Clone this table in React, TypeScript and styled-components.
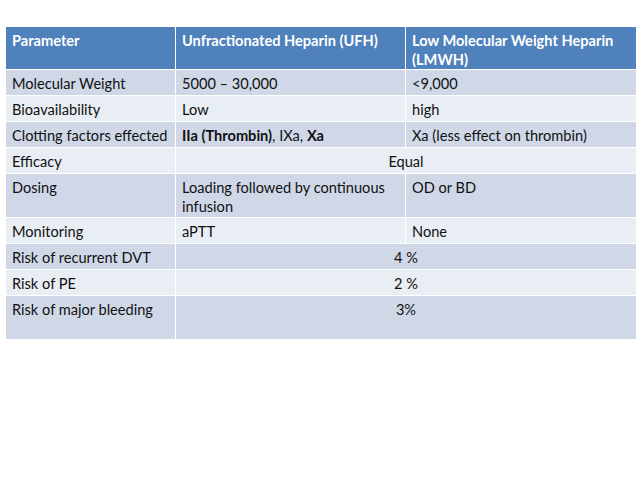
import React from "react";
import styled, { createGlobalStyle } from "styled-components";

const Global = createGlobalStyle`
  html, body { margin: 0; padding: 0; background: #ffffff; }
  body { font-family: "Lato", "Liberation Sans", sans-serif; }
`;

const Page = styled.div`
  width: 638px;
  height: 479px;
  padding: 26px 0 0 5px;
  box-sizing: border-box;
  background: #ffffff;
`;

const Table = styled.table`
  border-collapse: collapse;
  table-layout: fixed;
  width: 631px;
  font-family: "Lato", "Liberation Sans", sans-serif;
  font-size: 14.6px;
  color: #111111;
`;

const HeadCell = styled.th`
  background: #4f81bd;
  color: #ffffff;
  font-weight: 700;
  text-align: left;
  vertical-align: top;
  height: 43px;
  padding: 4px 6px 0 6px;
  box-sizing: border-box;
  border: 1px solid #ffffff;
  line-height: 19px;
`;

const Row = styled.tr<{ $alt: boolean; $tall?: boolean }>`
  background: ${(p) => (p.$alt ? "#e9edf4" : "#d0d8e8")};
  height: ${(p) => (p.$tall ? "44px" : "26px")};
`;

const Cell = styled.td<{ $center?: boolean }>`
  border: 1px solid #ffffff;
  padding: 4px 6px 0 6px;
  vertical-align: top;
  text-align: ${(p) => (p.$center ? "center" : "left")};
  line-height: 19px;
  box-sizing: border-box;
`;

const B = styled.b`
  font-weight: 700;
`;

export default function App() {
  return (
    <>
      <Global />
      <Page>
        <Table>
          <colgroup>
            <col style={{ width: 170 }} />
            <col style={{ width: 230 }} />
            <col style={{ width: 231 }} />
          </colgroup>
          <thead>
            <tr>
              <HeadCell>Parameter</HeadCell>
              <HeadCell>Unfractionated Heparin (UFH)</HeadCell>
              <HeadCell>Low Molecular Weight Heparin (LMWH)</HeadCell>
            </tr>
          </thead>
          <tbody>
            <Row $alt={false}>
              <Cell>Molecular Weight</Cell>
              <Cell>5000 – 30,000</Cell>
              <Cell>&lt;9,000</Cell>
            </Row>
            <Row $alt>
              <Cell>Bioavailability</Cell>
              <Cell>Low</Cell>
              <Cell>high</Cell>
            </Row>
            <Row $alt={false}>
              <Cell>Clotting factors effected</Cell>
              <Cell>
                <B>IIa (Thrombin)</B>, IXa, <B>Xa</B>
              </Cell>
              <Cell>Xa (less effect on thrombin)</Cell>
            </Row>
            <Row $alt>
              <Cell>Efficacy</Cell>
              <Cell colSpan={2} $center>Equal</Cell>
            </Row>
            <Row $alt={false} $tall>
              <Cell>Dosing</Cell>
              <Cell>Loading followed by continuous infusion</Cell>
              <Cell>OD or BD</Cell>
            </Row>
            <Row $alt>
              <Cell>Monitoring</Cell>
              <Cell>aPTT</Cell>
              <Cell>None</Cell>
            </Row>
            <Row $alt={false}>
              <Cell>Risk of recurrent DVT</Cell>
              <Cell colSpan={2} $center>4 %</Cell>
            </Row>
            <Row $alt>
              <Cell>Risk of PE</Cell>
              <Cell colSpan={2} $center>2 %</Cell>
            </Row>
            <Row $alt={false} $tall>
              <Cell>Risk of major bleeding</Cell>
              <Cell colSpan={2} $center>3%</Cell>
            </Row>
          </tbody>
        </Table>
      </Page>
    </>
  );
}
